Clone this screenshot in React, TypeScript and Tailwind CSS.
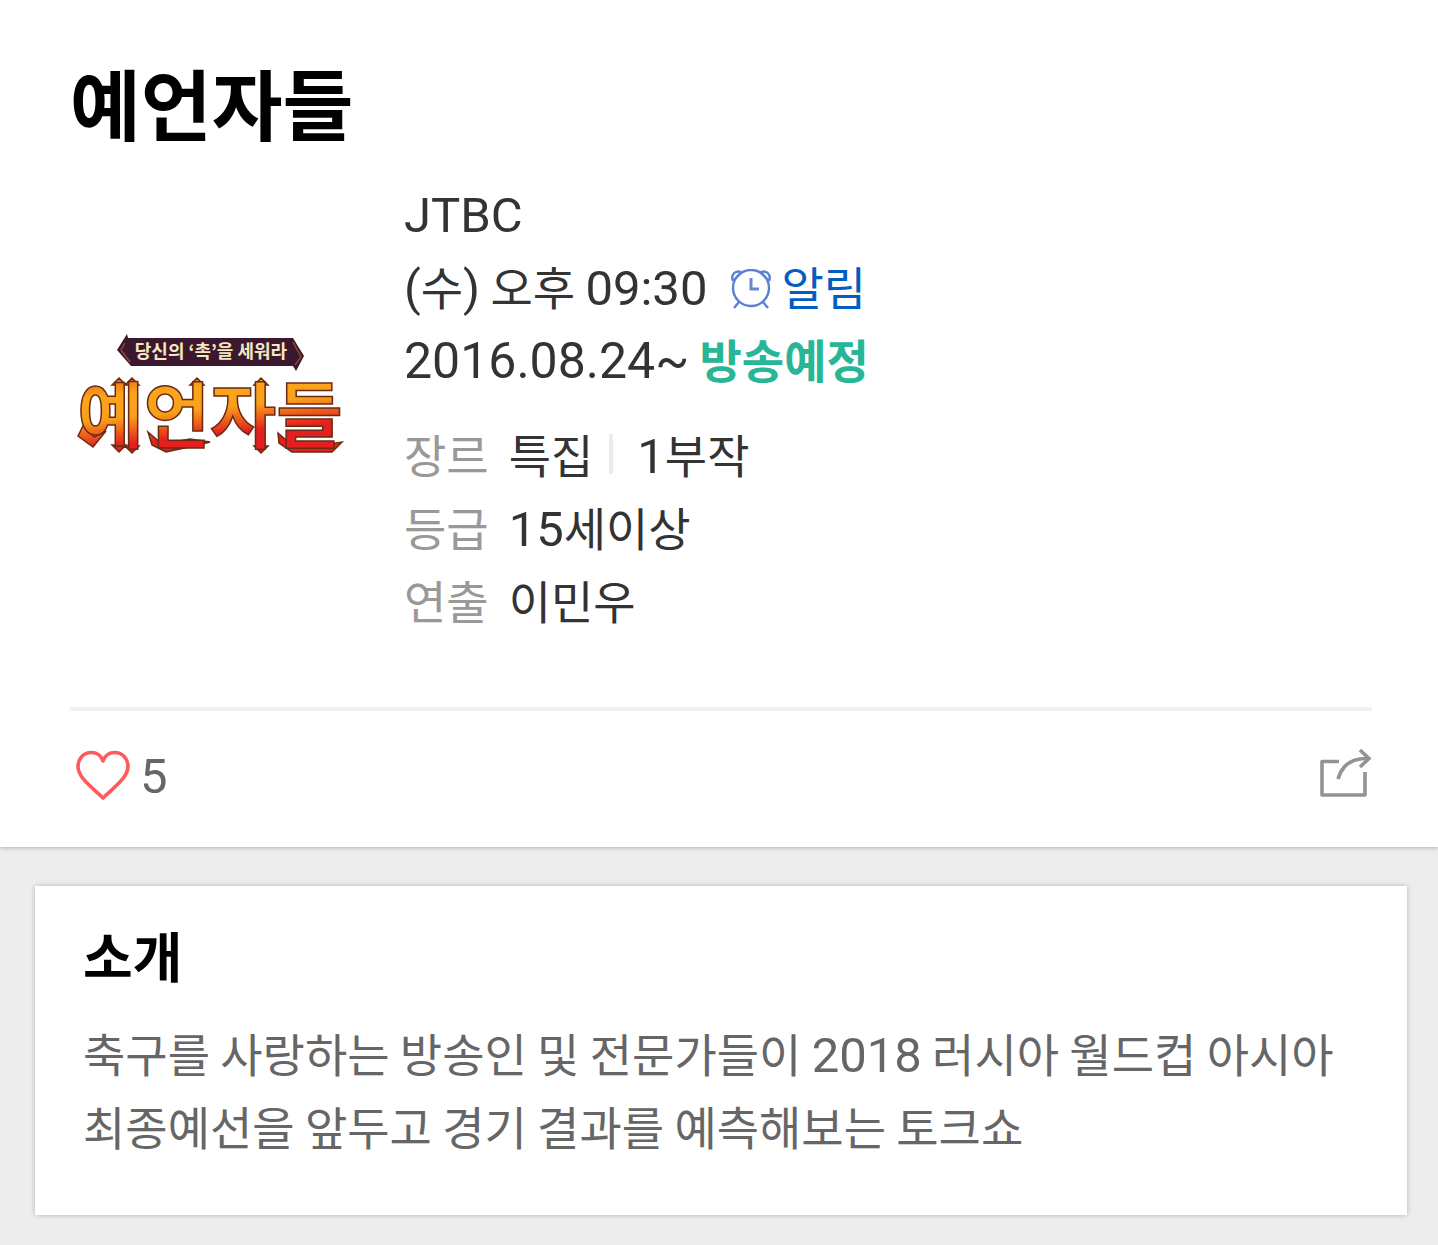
import type { ReactNode } from "react";

const details: { label: string; values: ReactNode[] }[] = [
  { label: "장르", values: ["특집", <><Num>1</Num>부작</>] },
  { label: "등급", values: [<><Num>15</Num>세이상</>] },
  { label: "연출", values: ["이민우"] },
];

// Latin text and digits sit slightly larger than the Hangul around them
function Num({ children }: { children: ReactNode }) {
  return <span className="font-['Roboto',sans-serif] text-[49px] leading-none">{children}</span>;
}

function ShowLogo() {
  return (
    <svg viewBox="0 -3 280 430" className="h-[430px] w-[280px] shrink-0" role="img" aria-label="예언자들">
      <defs>
        <linearGradient id="fire" gradientUnits="userSpaceOnUse" x1="0" y1="198" x2="8" y2="274">
          <stop offset="0" stopColor="#ee5a22" />
          <stop offset="0.3" stopColor="#fba51a" />
          <stop offset="0.6" stopColor="#f9a01b" />
          <stop offset="0.95" stopColor="#e3201f" />
        </linearGradient>
      </defs>
      <path d="M58 159H223L234 177L226 192L223 187H61L47 171L57 155Z" fill="#3b1830" />
      <path d="M55 164L51 171L60 183M223 163L231 178L225 186" fill="none" stroke="#8b4d23" strokeWidth="1.5" />
      <text x="141" y="179" textAnchor="middle" fontSize="18" fontWeight="700" fill="#f5e8bd">
        당신의 ‘촉’을 세워라
      </text>
      <g fill="url(#fire)" stroke="#6b2a12" strokeWidth="1.5">
        {/* flame-like spurs behind the lettering */}
        <path d="M14 245L24 258L36 252L23 268L8 257Z" />
        <path d="M42 206L49 199L56 206ZM55 206L62 199L69 206ZM120 206L127 199L134 206ZM184 206L191 199L198 206Z" />
        <path d="M42 266L49 273L56 266ZM55 267L62 274L69 267ZM184 267L191 274L198 267Z" />
        <path d="M78 253L92 265L120 260L140 263L124 267L96 273L82 266Z" />
        <path d="M208 254L222 266L260 265L272 263L262 273L222 273L209 264Z" />
        <text x="140" y="263" textAnchor="middle" fontSize="72" fontWeight="700">
          예언자들
        </text>
      </g>
    </svg>
  );
}

function AlarmIcon() {
  return (
    <svg viewBox="0 0 40 40" className="mt-1.5 size-10" fill="none" stroke="#5b82d2" strokeWidth="2.4" aria-hidden="true">
      <circle cx="20" cy="19" r="18" />
      <path d="M2 12C-1 5 6 0 11 4M38 12C41 5 34 0 29 4M3 11L10 4M37 11L30 4" />
      <path d="M8 33L3 39M32 33L37 39" />
      <path d="M20 9V20H28" stroke="#6c86cc" strokeWidth="3" />
    </svg>
  );
}

function HeartIcon() {
  return (
    <svg viewBox="0 0 54 52" className="h-[52px] w-[54px]" fill="none" stroke="#ff5a5c" strokeWidth="3.6" strokeLinejoin="round" aria-hidden="true">
      <path d="M27 11C25 5 20 2.500 15.500 2.500C7 2.500 2 9 2 16.500C2 28 17 38 27 48C37 38 52 28 52 16.500C52 9 47 2.500 38.500 2.500C34 2.500 29 5 27 11Z" />
    </svg>
  );
}

function ShareIcon() {
  return (
    <svg viewBox="0 0 54 52" className="h-[52px] w-[54px] overflow-visible" fill="none" stroke="#929297" strokeWidth="3.6" aria-hidden="true">
      <path d="M21 11.500H4V45H47V22" strokeLinejoin="round" />
      <path d="M20 29C24 15 34 8 50 8.500" />
      <path d="M42 0L51 8.500L42 17" />
    </svg>
  );
}

export default function App() {
  return (
    <div className="min-h-screen bg-[#ededed] pb-[30px] font-['Noto_Sans_CJK_KR',sans-serif] text-[46px] leading-[73px] text-[#333]">
      <header className="bg-white pr-[66px] pl-[70px] shadow-[0_1px_4px_rgba(0,0,0,0.25)]">
        <h1 className="pt-[52px] text-[77px] leading-[100px] font-bold text-black">예언자들</h1>
        <div className="flex gap-[54px] pt-6 pb-[71px]">
          <ShowLogo />
          <div>
            <p><Num>JTBC</Num></p>
            <div className="flex items-center">
              <p>
                <Num>(</Num>수<Num>)</Num> 오후 <Num>09:30</Num>
              </p>
              <button type="button" className="ml-6 flex items-center gap-2.5 text-[#005dc1]">
                <AlarmIcon />
                알림
              </button>
            </div>
            <p>
              <span className="font-['Roboto',sans-serif] text-[50px] leading-none">2016.08.24~</span>{" "}
              <strong className="font-bold text-[#28b696]">방송예정</strong>
            </p>
            <dl className="mt-[22px]">
              {details.map(({ label, values }) => (
                <div key={label} className="flex">
                  <dt className="mr-5 text-[#999]">{label}</dt>
                  {values.map((value, i) => (
                    <dd key={i} className="flex items-center">
                      {i > 0 && <span className="mr-6 ml-4 h-10 w-1 bg-[#ebebeb]" />}
                      <span>{value}</span>
                    </dd>
                  ))}
                </div>
              ))}
            </dl>
          </div>
        </div>
        <div className="flex h-[140px] items-center justify-between border-t-4 border-[#f1f1f1] pb-1.5">
          <button type="button" aria-label="좋아요 5" className="ml-1.5 flex items-center gap-2.5 text-[#666]">
            <HeartIcon />
            <Num>5</Num>
          </button>
          <button type="button" aria-label="공유">
            <ShareIcon />
          </button>
        </div>
      </header>
      <main className="mt-[39px] mr-[31px] ml-[35px] bg-white px-12 pt-8 pb-[53px] shadow-[0_0_5px_rgba(0,0,0,0.25)]">
        <h2 className="text-[54px] font-bold text-black">소개</h2>
        <p className="mt-[25px] text-[#666]">
          축구를 사랑하는 방송인 및 전문가들이 <Num>2018</Num> 러시아 월드컵 아시아 최종예선을 앞두고 경기 결과를 예측해보는 토크쇼
        </p>
      </main>
    </div>
  );
}
